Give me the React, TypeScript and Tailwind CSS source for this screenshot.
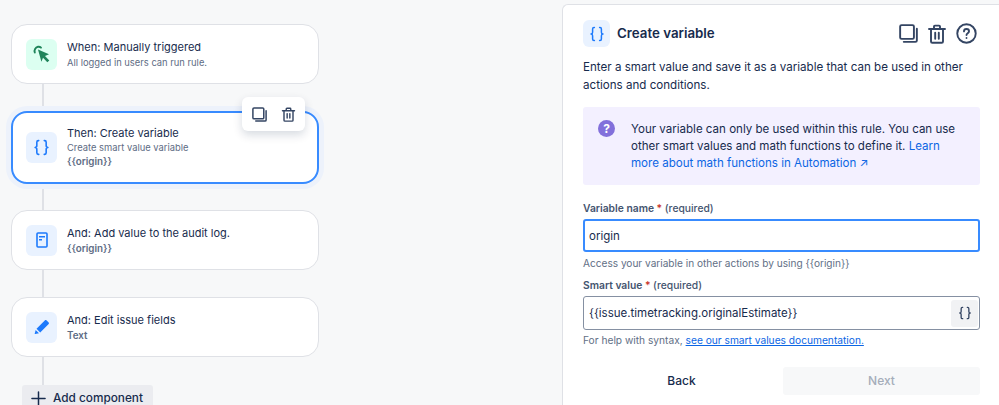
import type { ReactNode } from 'react'

function BracesIcon({ className }: { className: string }) {
  return (
    <svg viewBox="0 0 16 16" fill="none" stroke="currentColor" strokeWidth="1.500" strokeLinecap="round" strokeLinejoin="round" className={className}>
      <path d="M5.400 1.500H5C4 1.500 3.600 2 3.600 3v3.200C3.600 7.200 3 8 2 8c1 0 1.600.8 1.600 1.800V13c0 1 .4 1.500 1.400 1.500h.4" />
      <path d="M10.600 1.500h.4c1 0 1.400.5 1.400 1.500v3.200C12.400 7.200 13 8 14 8c-1 0-1.600.8-1.600 1.800V13c0 1-.4 1.500-1.400 1.500h-.4" />
    </svg>
  )
}

function CopyIcon({ className }: { className: string }) {
  return (
    <svg viewBox="0 0 20 20" fill="none" stroke="currentColor" strokeWidth="2" strokeLinecap="round" strokeLinejoin="round" className={className}>
      <rect x="1.200" y="1.200" width="14.500" height="14.500" rx="1.500" />
      <path d="M18.800 5v12.300c0 .9-.6 1.500-1.500 1.500H5" />
    </svg>
  )
}

function TrashIcon({ className }: { className: string }) {
  return (
    <svg viewBox="0 0 20 20" fill="none" stroke="currentColor" strokeWidth="1.900" strokeLinecap="round" strokeLinejoin="round" className={className}>
      <path d="M2 5h16M7 5V2.500c0-.5.4-.9.9-.9h4.200c.5 0 .9.400.9.900V5" />
      <path d="M4 5v12.500c0 .8.500 1.300 1.300 1.300h9.400c.8 0 1.300-.5 1.300-1.300V5" />
      <path d="M8.200 8.800v6M11.800 8.800v6" />
    </svg>
  )
}

function Tile({ tone, children }: { tone: string; children: ReactNode }) {
  return <div className={`flex shrink-0 items-center justify-center rounded-[6px] ${tone}`}>{children}</div>
}

function Connector({ height }: { height: string }) {
  return <div className={`ml-[31px] w-[2px] bg-[#dfe1e6] ${height}`} />
}

function RuleCard({ icon, title, sub, code }: { icon: ReactNode; title: string; sub?: string; code?: string }) {
  return (
    <div className="flex h-[60px] items-center gap-[10px] rounded-[16px] border border-[#dfe1e6] bg-white pl-[14px]">
      {icon}
      <div>
        <div className="text-[11px] leading-[16px] text-[#172b4d]">{title}</div>
        {sub && <div className="text-[9.400px] leading-[15px] text-[#5e6c84]">{sub}</div>}
        {code && <div className="text-[9.800px] leading-[15px] font-semibold text-[#5e6c84]">{code}</div>}
      </div>
    </div>
  )
}

export default function App() {
  return (
    <div className="flex h-[405px] w-[999px] overflow-hidden bg-[#f7f8f9] font-['Inter',sans-serif]">
      {/* Rule chain */}
      <div className="w-[562px] shrink-0 pt-[24px] pl-[11px]">
        <div className="w-[308px]">
          <RuleCard
            title="When: Manually triggered"
            sub="All logged in users can run rule."
            icon={
              <Tile tone="h-[31px] w-[31px] bg-[#dcfff1]">
                <svg viewBox="0 0 20 20" className="h-[20px] w-[20px]" fill="none">
                  <path d="M2.800 8.500A4.300 4.300 0 0 1 6 2.800c1.300-.2 2.300.2 3 .9" stroke="#1f845a" strokeWidth="1.900" strokeLinecap="round" />
                  <path d="M6 5.500l11 4.800-4 1.600 4.300 4.500-2 1.900-4.300-4.500-1.600 4z" fill="#1f845a" />
                </svg>
              </Tile>
            }
          />
          <Connector height="h-[27px]" />
          <div className="relative flex h-[73px] items-center gap-[10px] rounded-[16px] border-2 border-[#388bff] bg-white pl-[13px] shadow-[0_0_0_5px_#edf2fb]">
            <Tile tone="h-[31px] w-[31px] bg-[#e9f2ff]">
              <BracesIcon className="h-[17px] w-[17px] text-[#1d7afc]" />
            </Tile>
            <div className="pb-[2px]">
              <div className="text-[11px] leading-[16px] text-[#172b4d]">Then: Create variable</div>
              <div className="text-[9.400px] leading-[14px] text-[#5e6c84]">Create smart value variable</div>
              <div className="text-[9.800px] leading-[14px] font-semibold text-[#5e6c84]">{'{{origin}}'}</div>
            </div>
            <div className="absolute top-[-16px] right-[12px] flex h-[34px] w-[63px] items-center justify-center gap-[14px] rounded-[6px] bg-white text-[#344563] shadow-[0_4px_10px_rgba(9,30,66,0.16)]">
              <CopyIcon className="h-[15px] w-[15px]" />
              <TrashIcon className="h-[15px] w-[15px]" />
            </div>
          </div>
          <Connector height="h-[26px]" />
          <RuleCard
            title="And: Add value to the audit log."
            code="{{origin}}"
            icon={
              <Tile tone="h-[31px] w-[31px] bg-[#e9f2ff]">
                <svg viewBox="0 0 12 16" className="h-[16px] w-[12px]" fill="none">
                  <rect x="1" y="1" width="10" height="14" rx="1" stroke="#1d7afc" strokeWidth="1.600" />
                  <path d="M3 4.800h6M3 7.800h3" stroke="#1d7afc" strokeWidth="1.500" />
                </svg>
              </Tile>
            }
          />
          <Connector height="h-[27px]" />
          <RuleCard
            title="And: Edit issue fields"
            code="Text"
            icon={
              <Tile tone="h-[31px] w-[31px] bg-[#e9f2ff]">
                <svg viewBox="0 0 16 16" className="h-[16px] w-[16px]" fill="#1d7afc">
                  <path d="M11 1.200c.4-.4 1-.4 1.400 0l2.300 2.300c.4.4.4 1 0 1.400L6.200 13.400 2.500 9.700z" />
                  <path d="M1.700 10.900l3.300 3.300-3.700.9c-.4.100-.7-.2-.6-.6z" />
                </svg>
              </Tile>
            }
          />
          <Connector height="h-[28px]" />
          <button className="ml-[11px] flex h-[26px] w-[131px] items-center gap-[7px] rounded-t-[3px] bg-[#ebecf0] pl-[9px] text-[11.800px] leading-[14px] font-medium text-[#172b4d]">
            <svg viewBox="0 0 16 16" className="h-[15px] w-[15px]" stroke="currentColor" strokeWidth="1.600" strokeLinecap="round">
              <path d="M8 1v14M1 8h14" />
            </svg>
            Add component
          </button>
        </div>
      </div>

      {/* Config panel */}
      <div className="mt-[4px] flex-1 rounded-tl-[6px] border-t border-l border-[#dfe1e6] bg-white pt-[15px] pl-[20px]">
        <div className="w-[397px]">
          <div className="flex h-[27px] items-center">
            <Tile tone="h-[27px] w-[27px] bg-[#e9f2ff]">
              <BracesIcon className="h-[16px] w-[16px] text-[#1d7afc]" />
            </Tile>
            <div className="ml-[7px] text-[13.300px] font-semibold text-[#172b4d]">Create variable</div>
            <div className="ml-auto mr-[3px] flex items-center gap-[9px] text-[#344563]">
              <CopyIcon className="h-[19px] w-[19px]" />
              <TrashIcon className="h-[20px] w-[20px]" />
              <svg viewBox="0 0 20 20" className="h-[21px] w-[21px]" fill="none" stroke="currentColor" strokeWidth="1.800" strokeLinecap="round">
                <circle cx="10" cy="10" r="8.800" />
                <path d="M7.600 8c0-1.400 1-2.300 2.400-2.300s2.400.9 2.400 2.200c0 1.800-2.400 1.800-2.400 3.500" />
                <path d="M10 14.300v.1" />
              </svg>
            </div>
          </div>

          <p className="mt-[12px] text-[11.600px] leading-[17.500px] text-[#172b4d]">
            Enter a smart value and save it as a variable that can be used in other actions and conditions.
          </p>

          <div className="mt-[13px] flex h-[78px] rounded-[3px] bg-[#f3f0ff] pt-[13px] pl-[15px]">
            <div className="flex h-[17px] w-[17px] shrink-0 items-center justify-center rounded-full bg-[#8270db] text-[12px] leading-none font-bold text-white">?</div>
            <p className="mt-[1px] ml-[16px] w-[340px] text-[11.550px] leading-[17px] text-[#172b4d]">
              Your variable can only be used within this rule. You can use other smart values and math functions to define it.{' '}
              <a className="text-[#0c66e4]">Learn more about math functions in Automation ↗</a>
            </p>
          </div>

          <div className="mt-[16px] text-[10.300px] leading-[14px] font-semibold text-[#44546f]">
            Variable name <span className="text-[#c9372c]">*</span> <span className="font-medium">(required)</span>
          </div>
          <div className="mt-[4px] flex h-[33px] items-center rounded-[3px] border-2 border-[#388bff] pt-[2px] pl-[4px] text-[11.500px] text-[#172b4d]">origin</div>
          <div className="mt-[4px] text-[10.100px] leading-[14px] text-[#626f86]">{'Access your variable in other actions by using {{origin}}'}</div>

          <div className="mt-[8px] text-[10.300px] leading-[14px] font-semibold text-[#44546f]">
            Smart value <span className="text-[#c9372c]">*</span> <span className="font-medium">(required)</span>
          </div>
          <div className="mt-[4px] flex h-[34px] items-center justify-between rounded-[3px] border border-[#8590a2] pr-[1px] pl-[5px] text-[11.500px] text-[#172b4d]">
            <span className="pt-[2px]">{'{{issue.timetracking.originalEstimate}}'}</span>
            <div className="flex h-[27px] w-[27px] items-center justify-center rounded-[3px] bg-[#f1f2f4]">
              <BracesIcon className="h-[14px] w-[14px] text-[#344563]" />
            </div>
          </div>
          <div className="mt-[3px] text-[10.200px] leading-[14px] text-[#626f86]">
            For help with syntax, <a className="text-[#0c66e4] underline">see our smart values documentation.</a>
          </div>

          <div className="mt-[20px] flex justify-between">
            <button className="h-[28px] w-[197px] text-[12px] font-medium text-[#172b4d]">Back</button>
            <button className="h-[28px] w-[197px] rounded-[3px] bg-[#f7f8f9] text-[12px] font-medium text-[#a5adba]">Next</button>
          </div>
        </div>
      </div>
    </div>
  )
}
